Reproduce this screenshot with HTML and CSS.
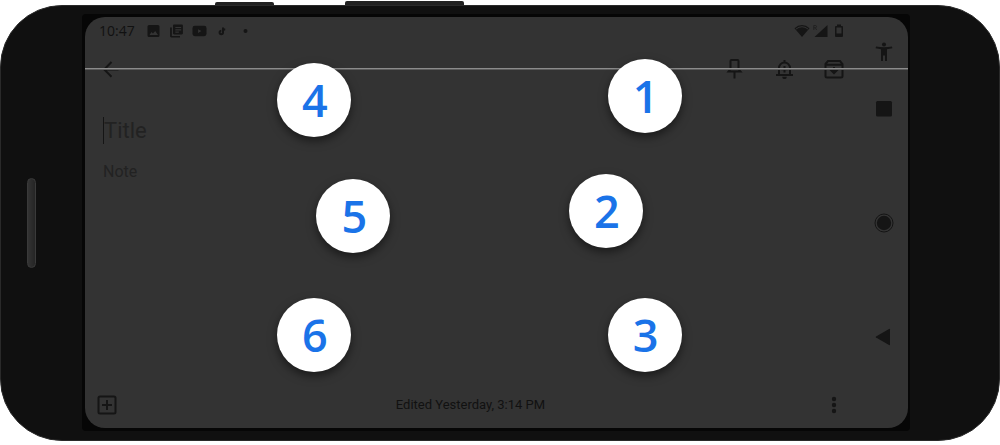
FILE: index.html
```html
<!DOCTYPE html>
<html lang="en">
<head>
    <meta charset="UTF-8">
    <meta name="viewport" content="width=device-width, initial-scale=1.0">
    <title>Braille keyboard</title>
    <link rel="stylesheet" href="styles.css">
</head>
<body>
    <div class="side-keys">
        <span class="key power"></span>
        <span class="key volume"></span>
    </div>
    <div class="phone">
        <div class="chin"><span class="speaker"></span></div>
        <div class="bezel">
            <div class="screen">
                <main class="app">
                    <div class="status-bar">
                        <span class="time">10:47</span>
                        <div class="notifications">
                            <svg width="15" height="14" viewBox="0 0 14 14"><path fill-rule="evenodd" d="M2.500 1h9A1.500 1.500 0 0 1 13 2.500v9a1.500 1.500 0 0 1-1.500 1.500h-9A1.500 1.500 0 0 1 1 11.500v-9A1.500 1.500 0 0 1 2.500 1zM3 11h8.500L8.700 7 6.500 9.600 5 8z"/></svg>
                            <svg width="15" height="14" viewBox="0 0 24 24"><path d="M4 6H1v15c0 1.100.9 2 2 2h15v-2.500H4z"/><path fill-rule="evenodd" d="M8 1h13c1.100 0 2 .9 2 2v13c0 1.100-.9 2-2 2H8c-1.100 0-2-.9-2-2V3c0-1.100.9-2 2-2zm2 4v2h10V5zm0 4v2h10V9zm0 4v2h6v-2z"/></svg>
                            <svg width="15" height="14" viewBox="0 0 16 14"><path fill-rule="evenodd" d="M3 1.500h10q2.500 0 2.500 2.500v6q0 2.500-2.500 2.500H3Q.5 12.500.5 10V4Q.5 1.500 3 1.500zm3.500 3.500v4L10 7z"/></svg>
                            <svg width="15" height="14" viewBox="0 0 14 14"><path class="line" d="M7.500 3.500v5a1.700 1.700 0 1 1-1.700-1.700M7.500 4q.5 1.500 2.200 1.700"/></svg>
                            <svg width="15" height="14" viewBox="0 0 14 14"><circle cx="7" cy="7" r="2"/></svg>
                        </div>
                        <div class="signals">
                            <svg width="16" height="14" viewBox="0 0 16 14"><path d="M8 13 .5 4.200Q3.800 1 8 1t7.500 3.200z"/><path class="arc" d="M2 5q6-4.500 12 0"/></svg>
                            <svg width="18" height="14" viewBox="0 0 18 14"><path d="M14.500 1v12h-13z"/><path class="roam" d="M.8 6V1.500h1.500q1.200 0 1.200 1.100T2.300 3.800H.8M2.300 3.800 3.700 6"/></svg>
                            <svg width="10" height="14" viewBox="0 0 10 14"><path fill-rule="evenodd" d="M3 .5h4V2h1q1 0 1 1v9q0 1-1 1H2q-1 0-1-1V3q0-1 1-1h1zM2.500 3.500v6h5v-6z"/></svg>
                        </div>
                    </div>
                    <div class="toolbar">
                        <button class="icon-button" aria-label="Back"><svg width="20" height="20" viewBox="0 0 20 20"><path class="stroke" d="M10.500 3 3.200 10.500l7.300 7.300M3 10.600h14.500"/></svg></button>
                        <div class="actions">
                            <button class="icon-button" aria-label="Pin"><svg width="20" height="20" viewBox="0 0 20 20"><path class="stroke" d="M6.500 10V2q0-1 1-1h6q1 0 1 1v8l2 2.500h-12zM10.500 12.500V19.500"/></svg></button>
                            <button class="icon-button" aria-label="Reminder"><svg width="20" height="20" viewBox="0 0 20 20"><path class="stroke" d="M2 16h17M5 16V9a5.500 5.500 0 0 1 11 0v7M10.500 3.500V1M10.500 7v6.500M7.500 10.200h6"/><path d="M8.200 17.800h4.600a2.300 2.300 0 0 1-4.600 0z"/></svg></button>
                            <button class="icon-button" aria-label="Archive"><svg width="20" height="20" viewBox="0 0 20 20"><path class="stroke" d="M1.500 5 4 2h12l2.500 3v12a1.500 1.500 0 0 1-1.500 1.500H3A1.500 1.500 0 0 1 1.500 17zM1.500 5.800h17"/><path d="M9 8h2v3h3.500L10 15.500 5.500 11H9z"/></svg></button>
                        </div>
                    </div>
                    <div class="note">
                        <input class="title" type="text" placeholder="Title" aria-label="Title">
                        <textarea class="text" rows="1" placeholder="Note" aria-label="Note"></textarea>
                    </div>
                    <div class="bottom-bar">
                        <button class="icon-button" aria-label="Add"><svg width="20" height="20" viewBox="0 0 20 20"><rect class="stroke" x="1.500" y="1.500" width="17" height="17" rx="1.500"/><path class="stroke" d="M10 5v10M5 10h10"/></svg></button>
                        <span class="edited">Edited Yesterday, 3:14 PM</span>
                        <button class="icon-button more" aria-label="More"><svg width="20" height="20" viewBox="0 0 20 20"><circle cx="10" cy="4" r="2.200"/><circle cx="10" cy="10" r="2.200"/><circle cx="10" cy="16" r="2.200"/></svg></button>
                    </div>
                </main>
                <nav class="nav-bar">
                    <button class="icon-button" aria-label="Accessibility"><svg width="20" height="20" viewBox="0 0 20 20"><circle cx="10" cy="2.500" r="2"/><path d="M2 4.500q8 1.500 16 0l.4 1.800q-2.700.7-5.400.9V19h-2v-5.500H9V19H7V7.200q-2.700-.2-5.400-.9z"/></svg></button>
                    <div class="system-keys">
                        <button class="icon-button" aria-label="Overview"><svg width="20" height="20" viewBox="0 0 20 20"><rect x="2" y="2" width="16" height="15.500" rx="1.500"/></svg></button>
                        <button class="icon-button" aria-label="Home"><svg width="20" height="20" viewBox="0 0 20 20"><circle cx="10" cy="10" r="7.200"/><circle class="ring" cx="10" cy="10" r="9"/></svg></button>
                        <button class="icon-button" aria-label="Navigate back"><svg width="20" height="20" viewBox="0 0 20 20"><path d="M16 2.500v15q0 1-1 .5L2 10.500q-.8-.5 0-1L15 2q1-.5 1 .5z"/></svg></button>
                    </div>
                </nav>
                <div class="braille">
                    <button class="dot dot-1">1</button>
                    <button class="dot dot-2">2</button>
                    <button class="dot dot-3">3</button>
                    <button class="dot dot-4">4</button>
                    <button class="dot dot-5">5</button>
                    <button class="dot dot-6">6</button>
                </div>
            </div>
        </div>
    </div>
</body>
</html>
```

FILE: styles.css
```css
* {
    box-sizing: border-box;
}
body {
    margin: 0;
    min-height: 100vh;
    padding: 1px 0 4px;
    display: flex;
    flex-direction: column;
    background-color: #fff;
    font-family: Roboto, Arial, sans-serif;
}
svg {
    display: block;
    fill: #151515;
}

/* phone body */
.side-keys {
    display: flex;
    align-items: flex-end;
    gap: 71px;
    height: 4px;
    padding-left: 215px;
}
.key {
    background-color: #222;
    border-radius: 2px 2px 0 0;
}
.power {
    width: 59px;
    height: 3px;
}
.volume {
    width: 119px;
    height: 4px;
}
.phone {
    flex: 1;
    display: flex;
    padding: 8px 89px 9px 0;
    background-color: #101010;
    border: 1px solid #2a2a2a;
    border-radius: 62px;
}
.chin {
    width: 81px;
    display: flex;
    align-items: center;
    padding-left: 26px;
}
.speaker {
    width: 9px;
    height: 90px;
    border-radius: 5px;
    border: 1px solid #3a3a3a;
    background: linear-gradient(to right, #333, #252525);
}
.bezel {
    flex: 1;
    display: flex;
    padding: 3px 2px 3px 3px;
    background-color: #060606;
    border-radius: 4px;
}
.screen {
    flex: 1;
    display: flex;
    position: relative;
    overflow: hidden;
    background-color: #333;
    border-radius: 20px;
}

/* notes app */
.app {
    flex: 1;
    display: flex;
    flex-direction: column;
    padding: 4px 16px 13px;
}
.status-bar {
    display: flex;
    align-items: center;
    height: 20px;
    margin-left: -2px;
}
.time {
    width: 47px;
    font-family: "Open Sans", sans-serif;
    font-size: 14px;
    font-weight: 500;
    line-height: 20px;
    color: #111;
}
.notifications {
    display: flex;
    gap: 8px;
}
.signals {
    display: flex;
    gap: 3px;
    margin-left: auto;
}
.toolbar {
    display: flex;
    align-items: center;
    justify-content: space-between;
    margin-top: 18px;
}
.actions {
    display: flex;
    gap: 30px;
}
.icon-button {
    padding: 0;
    border: none;
    background: none;
    cursor: pointer;
}
.stroke {
    fill: none;
    stroke: #151515;
    stroke-width: 2;
}
.line {
    fill: none;
    stroke: #151515;
    stroke-width: 2;
}
.arc {
    fill: none;
    stroke: #333;
    stroke-width: 1;
}
.roam {
    fill: none;
    stroke: #222;
    stroke-width: 1;
}
.ring {
    fill: none;
    stroke: #151515;
    stroke-width: 1;
}
.note {
    flex: 1;
    display: flex;
    flex-direction: column;
    gap: 16px;
    padding: 38px 2px 0;
}
.title,
.text {
    padding: 0;
    border: none;
    outline: none;
    resize: none;
    background: none;
    color: #151515;
    font-family: Roboto, sans-serif;
}
.title {
    height: 27px;
    border-left: 1px solid #151515;
    font-size: 22px;
}
.text {
    height: 24px;
    font-size: 16px;
    line-height: 24px;
}
.title::placeholder,
.text::placeholder {
    color: #222;
    opacity: 1;
}
.bottom-bar {
    display: grid;
    grid-template-columns: 1fr auto 1fr;
    align-items: center;
    justify-items: start;
    margin-left: -4px;
}
.edited {
    font-size: 13px;
    line-height: 20px;
    color: #111;
}
.more {
    justify-self: end;
}

/* system navigation */
.nav-bar {
    width: 48px;
    display: flex;
    flex-direction: column;
    align-items: center;
    padding: 25px 0 81px;
}
.system-keys {
    flex: 1;
    display: flex;
    flex-direction: column;
    justify-content: space-between;
    margin-top: 37px;
}

/* braille keyboard over the app */
.braille {
    position: absolute;
    inset: 51px 0 0;
    border-top: 1px solid #8c8c8c;
    box-shadow: inset 0 1px #5c5c5c;
}
.dot {
    position: absolute;
    width: 74px;
    height: 74px;
    padding: 0 0 0 2px;
    border: none;
    border-radius: 50%;
    background-color: #fff;
    box-shadow: 0 4px 10px rgba(0, 0, 0, 0.5);
    color: #1a73e8;
    font-family: "Open Sans", sans-serif;
    font-size: 45px;
    font-weight: 600;
    line-height: 74px;
    transform: translate(-50%, -50%);
    cursor: pointer;
}
.dot-1 {
    left: 68%;
    top: 7.5%;
}
.dot-2 {
    left: 63.3%;
    top: 39.5%;
}
.dot-3 {
    left: 68%;
    top: 74%;
}
.dot-4 {
    left: 27.8%;
    top: 8.5%;
}
.dot-5 {
    left: 32.6%;
    top: 41%;
}
.dot-6 {
    left: 27.8%;
    top: 74%;
}
```
